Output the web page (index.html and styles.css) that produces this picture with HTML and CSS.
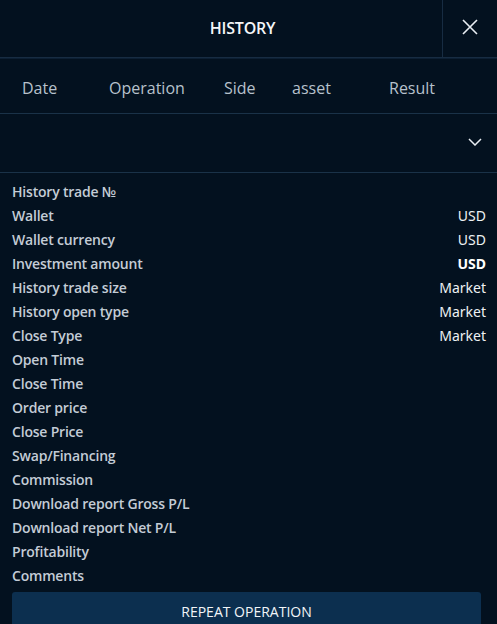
FILE: index.html
```html
<!DOCTYPE html>
<html>
<head>
<meta charset="utf-8">
<link rel="stylesheet" href="styles.css">
</head>
<body>
<div class="panel">
  <header class="head">
    <div class="title">HISTORY</div>
    <button class="close" aria-label="Close">
      <svg width="18" height="18" viewBox="0 0 18 18"><path d="M2 2L16 16M16 2L2 16" stroke="#e8edf2" stroke-width="1.6" fill="none"/></svg>
    </button>
  </header>
  <div class="cols">
    <span class="c-date">Date</span>
    <span class="c-op">Operation</span>
    <span class="c-side">Side</span>
    <span class="c-asset">asset</span>
    <span class="c-res">Result</span>
  </div>
  <div class="drop">
    <svg width="14" height="8" viewBox="0 0 14 8"><path d="M1 1L7 7L13 1" stroke="#e8edf2" stroke-width="1.5" fill="none"/></svg>
  </div>
  <div class="list">
    <div class="row"><span class="k">History trade №</span><span class="v"></span></div>
    <div class="row"><span class="k">Wallet</span><span class="v">USD</span></div>
    <div class="row"><span class="k">Wallet currency</span><span class="v">USD</span></div>
    <div class="row"><span class="k">Investment amount</span><span class="v b">USD</span></div>
    <div class="row"><span class="k">History trade size</span><span class="v">Market</span></div>
    <div class="row"><span class="k">History open type</span><span class="v">Market</span></div>
    <div class="row"><span class="k">Close Type</span><span class="v">Market</span></div>
    <div class="row"><span class="k">Open Time</span><span class="v"></span></div>
    <div class="row"><span class="k">Close Time</span><span class="v"></span></div>
    <div class="row"><span class="k">Order price</span><span class="v"></span></div>
    <div class="row"><span class="k">Close Price</span><span class="v"></span></div>
    <div class="row"><span class="k">Swap/Financing</span><span class="v"></span></div>
    <div class="row"><span class="k">Commission</span><span class="v"></span></div>
    <div class="row"><span class="k">Download report Gross P/L</span><span class="v"></span></div>
    <div class="row"><span class="k">Download report Net P/L</span><span class="v"></span></div>
    <div class="row"><span class="k">Profitability</span><span class="v"></span></div>
    <div class="row"><span class="k">Comments</span><span class="v"></span></div>
  </div>
  <button class="repeat">REPEAT OPERATION</button>
</div>
</body>
</html>
```
FILE: styles.css
```css
* { box-sizing: border-box; }
html, body {
  margin: 0;
  padding: 0;
  background: #03111f;
  height: 100%;
  overflow: hidden;
}
.panel {
  width: 497px;
  height: 624px;
  background: #03111f;
  font-family: "Open Sans", sans-serif;
  color: #c9d1da;
  display: flex;
  flex-direction: column;
}
.head {
  height: 58px;
  flex: none;
  display: flex;
  border-bottom: 1px solid #172c42;
}
.title {
  flex: 1;
  display: flex;
  align-items: center;
  justify-content: center;
  padding-left: 43px;
  padding-bottom: 2px;
  font-size: 16px;
  font-weight: 600;
  color: #f4f6f8;
  letter-spacing: -0.2px;
}
.close {
  width: 55px;
  height: 57px;
  border: none;
  border-left: 1px solid #172c42;
  background: transparent;
  display: flex;
  align-items: center;
  justify-content: center;
  padding: 0 0 3px 0;
  margin: 0;
}
.cols {
  height: 56px;
  flex: none;
  display: flex;
  align-items: center;
  padding-top: 4px;
  font-size: 16px;
  font-weight: 500;
  color: #b7c1cc;
  border-top: 1px solid #0c1f33;
  border-bottom: 1px solid #1a3248;
}
.cols span { display: block; }
.c-date { margin-left: 22px; width: 87px; }
.c-op { width: 115px; }
.c-side { width: 68px; }
.c-asset { width: 97px; }
.drop {
  height: 59px;
  flex: none;
  display: flex;
  align-items: center;
  justify-content: flex-end;
  padding-right: 15px;
  padding-bottom: 2px;
  border-bottom: 1px solid #1a3248;
}
.list {
  flex: none;
  padding: 6px 11px 0 12px;
  display: flex;
  flex-direction: column;
}
.row {
  height: 24px;
  display: flex;
  align-items: center;
  justify-content: space-between;
  font-size: 14px;
}
.k {
  font-weight: 600;
  color: #c3ccd6;
  letter-spacing: -0.2px;
}
.v {
  font-family: "Noto Sans", sans-serif;
  font-size: 14px;
  color: #eef1f4;
}
.v.b { font-weight: 700; color: #ffffff; }
.repeat {
  flex: none;
  margin: 5px 16px 0 12px;
  height: 40px;
  border: none;
  border-radius: 3px;
  background: #0c2f4f;
  color: #f2f5f8;
  font-family: "Open Sans", sans-serif;
  font-size: 14px;
  font-weight: 500;
  padding: 0 0 2px 0;
  text-align: center;
}
```
